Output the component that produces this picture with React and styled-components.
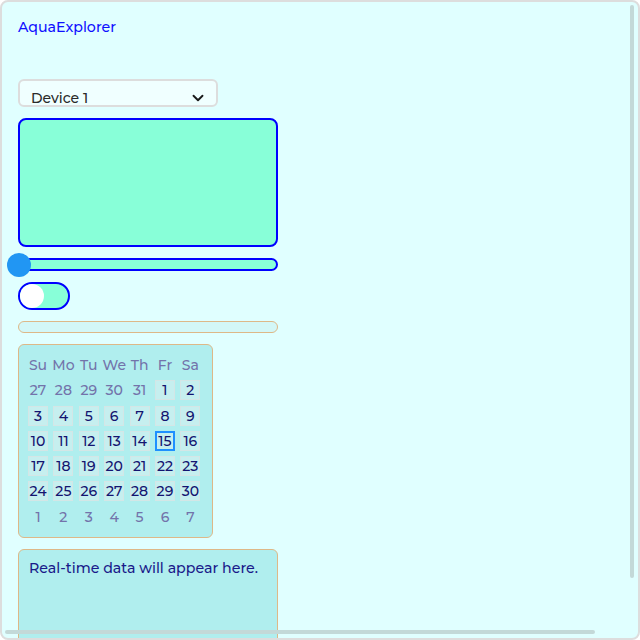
import React from 'react';
import styled, { createGlobalStyle } from 'styled-components';
import { ChevronDown } from 'lucide-react';

const GlobalStyle = createGlobalStyle`
  html, body {
    margin: 0;
    padding: 0;
    background: #ffffff;
  }
  * {
    box-sizing: border-box;
  }
`;

const Frame = styled.div`
  position: relative;
  width: 640px;
  height: 640px;
  border: 2px solid #dddddd;
  border-radius: 8px;
  background: #e0ffff;
  overflow: hidden;
  font-family: 'Montserrat', 'Noto Sans', sans-serif;
  font-weight: 500;
`;

const Scroller = styled.div`
  width: 100%;
  height: 100%;
  overflow: hidden;
`;

// overlay scrollbar thumbs, drawn over the content
const ScrollThumb = styled.span`
  position: absolute;
  background: #c3d9d8;
  border-radius: 2px;
  ${(p) =>
    p.$vertical
      ? 'right: 4px; top: 3px; width: 4px; height: 573px;'
      : 'left: 3px; bottom: 4px; height: 4px; width: 590px;'}
`;

const Content = styled.div`
  width: 676px;
  padding: 16px;
  display: flex;
  flex-direction: column;
  gap: 11px;
`;

const Title = styled.h1`
  margin: 0 0 32px;
  font-size: 14.2px;
  font-weight: 500;
  line-height: 18px;
  color: #1010ff;
`;

const Select = styled.div`
  width: 200px;
  height: 28px;
  border: 2px solid #dddddd;
  border-radius: 6px;
  background: #f0ffff;
  padding: 9px 9px 0 11px;
  display: flex;
  align-items: center;
  justify-content: space-between;
  font-size: 14px;
  line-height: 18px;
  color: #2a2a2a;
  svg {
    color: #1a1a1a;
    margin-top: 1px;
  }
`;

const Screen = styled.div`
  width: 260px;
  height: 129px;
  border: 2px solid #0000ff;
  border-radius: 8px;
  background: #88ffd8;
`;

const SliderTrack = styled.div`
  position: relative;
  width: 260px;
  height: 13px;
  border: 2px solid #0000ff;
  border-radius: 7px;
  background: #88ffd8;
`;

const SliderThumb = styled.span`
  position: absolute;
  left: -13px;
  top: 50%;
  width: 24px;
  height: 24px;
  margin-top: -12px;
  border-radius: 50%;
  background: #2196f3;
`;

const Toggle = styled.div`
  width: 52px;
  height: 28px;
  border: 2px solid #0000ff;
  border-radius: 14px;
  background: #88ffd8;
  display: flex;
  align-items: center;
  justify-content: ${(p) => (p.$on ? 'flex-end' : 'flex-start')};
`;

const Knob = styled.span`
  width: 24px;
  height: 24px;
  border-radius: 50%;
  background: #ffffff;
`;

const Progress = styled.div`
  width: 260px;
  height: 12px;
  border: 1px solid #deb887;
  border-radius: 6px;
  background: #d3f7f7;
`;

const Calendar = styled.div`
  width: 195px;
  height: 194px;
  border: 1px solid #deb887;
  border-radius: 6px;
  background: #b0eeee;
  padding: 10px 11px 10px 9px;
  display: grid;
  grid-template-columns: repeat(7, 20px);
  grid-auto-rows: 20px;
  column-gap: 5.4px;
  row-gap: 5.3px;
`;

const DayName = styled.div`
  display: flex;
  align-items: center;
  justify-content: center;
  font-size: 14px;
  color: #7373aa;
  white-space: nowrap;
`;

const Day = styled.div`
  display: flex;
  align-items: center;
  justify-content: center;
  font-size: 14px;
  white-space: nowrap;
  color: ${(p) => (p.$outside ? '#7373aa' : '#141470')};
  background: ${(p) => (p.$outside ? 'transparent' : '#c6efef')};
  border: ${(p) =>
    p.$selected ? '2px solid #1e90ff' : p.$outside ? 'none' : '1px solid #d4e6e6'};
`;

const DataPanel = styled.div`
  width: 260px;
  height: 130px;
  border: 1px solid #deb887;
  border-radius: 6px;
  background: #b0eeee;
  padding: 10px;
  font-size: 14.2px;
  line-height: 16px;
  color: #1a1a8a;
`;

const dayNames = ['Su', 'Mo', 'Tu', 'We', 'Th', 'Fr', 'Sa'];

const buildDays = () => {
  const days = [];
  [27, 28, 29, 30, 31].forEach((d) => days.push({ d, outside: true }));
  for (let d = 1; d <= 30; d++) days.push({ d, outside: false });
  for (let d = 1; d <= 7; d++) days.push({ d, outside: true });
  return days;
};

export default function App() {
  const days = buildDays();
  return (
    <>
      <GlobalStyle />
      <Frame>
        <Scroller>
          <Content>
            <Title>AquaExplorer</Title>
            <Select>
              <span>Device 1</span>
              <ChevronDown size={18} strokeWidth={2.5} />
            </Select>
            <Screen />
            <SliderTrack>
              <SliderThumb />
            </SliderTrack>
            <Toggle>
              <Knob />
            </Toggle>
            <Progress />
            <Calendar>
              {dayNames.map((n) => (
                <DayName key={n}>{n}</DayName>
              ))}
              {days.map((day, i) => (
                <Day
                  key={i}
                  $outside={day.outside}
                  $selected={!day.outside && day.d === 15}
                >
                  {day.d}
                </Day>
              ))}
            </Calendar>
            <DataPanel>Real-time data will appear here.</DataPanel>
          </Content>
        </Scroller>
        <ScrollThumb $vertical />
        <ScrollThumb />
      </Frame>
    </>
  );
}
